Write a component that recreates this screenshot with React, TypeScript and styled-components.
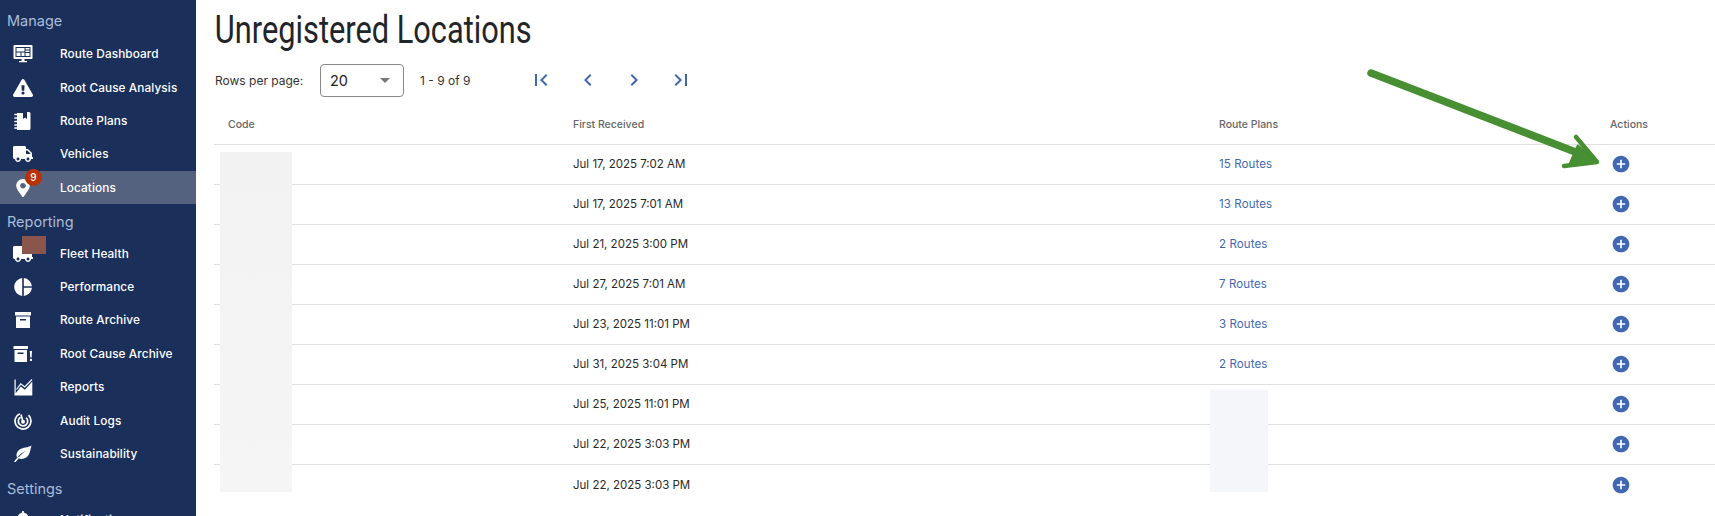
import styled, { createGlobalStyle } from 'styled-components';
import { FaBell, FaExclamationTriangle, FaMapMarkerAlt, FaTruck } from 'react-icons/fa';
import { MdAddCircle, MdChevronLeft, MdChevronRight, MdFirstPage, MdLastPage } from 'react-icons/md';
import type { ReactNode } from 'react';

const GlobalStyle = createGlobalStyle`
    html, body {
        margin: 0;
        height: 100%;
        overflow: hidden;
        background: #fff;
        font-family: Inter, 'Liberation Sans', sans-serif;
    }
    #root { height: 100%; }
`;

const DashboardIcon = () => (
    <svg width="20" height="20" viewBox="0 0 20 20" fill="#fff">
        <path fillRule="evenodd" d="M1.5 1h17a1 1 0 0 1 1 1v12a1 1 0 0 1-1 1h-17a1 1 0 0 1-1-1V2a1 1 0 0 1 1-1zM2.5 3v10h15V3zM3.5 4h8v3.5h-8zM3.5 8.5h4v3.5h-4zM8.5 8.5h3v3.5h-3zM12.5 4h4v1.5h-4zM12.5 6.5h4v1.5h-4zM12.5 9h4v3h-4z" />
        <path d="M8.5 15h3v2h2.5v1.2H6V17h2.5z" />
    </svg>
);

const PlansIcon = () => (
    <svg width="18" height="20" viewBox="0 0 18 20" fill="#fff">
        <path d="M3 2h6v6l2-1.5L13 8V1h2a1.5 1.5 0 0 1 1.5 1.5v15A1.5 1.5 0 0 1 15 19H3z" />
        <path d="M1 3.5h3M1 7h3M1 10.5h3M1 14h3M1 17h3" stroke="#fff" strokeWidth="1.7" strokeLinecap="round" />
    </svg>
);

const PieIcon = () => (
    <svg width="18" height="18" viewBox="0 0 18 18" fill="#fff">
        <path d="M8.200 0.050v17.900A9 9 0 0 1 8.200 0.050z" />
        <path d="M9.800 0.050A9 9 0 0 1 17.950 8.200H9.800z" />
        <path d="M9.800 9.800h8.150A9 9 0 0 1 9.800 17.950z" />
    </svg>
);

const ArchiveIcon = () => (
    <svg width="18" height="18" viewBox="0 0 18 18" fill="#fff">
        <path d="M1 1h16v3.500H1z" />
        <path fillRule="evenodd" d="M2 5.500h14V17H2zM6 8v1.600h6V8z" />
    </svg>
);

const CauseArchiveIcon = () => (
    <svg width="20" height="18" viewBox="0 0 20 18" fill="#fff">
        <path d="M0.500 1h14.500v3H0.500z" />
        <path fillRule="evenodd" d="M1.500 5h12.500v12H1.500zM4.500 7.500v1.600h6V7.500z" />
        <path d="M16.800 6h2.200l-.4 6.500h-1.400zM16.900 13.800h2v2.200h-2z" />
    </svg>
);

const ReportsIcon = () => (
    <svg width="19" height="17" viewBox="0 0 19 17" fill="#fff">
        <path d="M0.500 0.500h1.200v13.800L6.800 7.500l4.100 3.300L18.300 2.500v14H0.500z" />
        <path d="M2.500 10.500L6.800 4.800 10.700 8 18 0.500" fill="none" stroke="#fff" strokeWidth="1.100" />
    </svg>
);

const AuditIcon = () => (
    <svg width="18" height="18" viewBox="0 0 18 18" fill="none" stroke="#fff">
        <path d="M5.800 1.700A8 8 0 1 0 14.500 3.200" strokeWidth="1.700" />
        <path d="M6.600 5.200A4.700 4.700 0 1 0 12 5.600" strokeWidth="1.700" />
        <circle cx="9" cy="9.700" r="2" fill="#fff" stroke="none" />
        <path d="M9 9.700L7 2.500" strokeWidth="1.600" />
    </svg>
);

const LeafIcon = () => (
    <svg width="18" height="17" viewBox="0 0 18 17" fill="#fff">
        <path d="M17.500 0.500C16.800 2.500 16.500 6 15 9.300 13 13.500 8.500 14.800 4.300 13.300 6 10 9 7.500 12.500 5.700 8.500 7 5.200 9.500 3.300 12.700 1.800 10.500 2.500 6.500 6 4.300 9 2.400 14 2.800 17.500 0.500z" />
        <path d="M4.500 12.500L1 16.500" stroke="#fff" strokeWidth="1.500" strokeLinecap="round" />
    </svg>
);

const Page = styled.div`
    display: flex;
    height: 100%;
`;

const Sidebar = styled.nav`
    flex: 0 0 196px;
    height: 516px;
    padding-top: 5px;
    background: #1b2f5b;
    overflow: hidden;
    box-sizing: border-box;
`;

const SectionLabel = styled.div`
    height: 32.5px;
    padding: 2px 0 0 7px;
    box-sizing: border-box;
    line-height: 31px;
    font-size: 14.5px;
    color: #a9bcd8;

    &:first-child {
        padding-top: 0;
    }
`;

const NavItem = styled.div<{ $active?: boolean }>`
    position: relative;
    display: flex;
    align-items: center;
    height: 33.4px;
    background: ${p => (p.$active ? '#54627f' : 'transparent')};
    color: #fff;
    font-size: 11.8px;
    font-weight: 500;
    letter-spacing: 0.1px;
`;

const NavIcon = styled.span`
    display: flex;
    flex: 0 0 60px;
    justify-content: center;
    padding-right: 14px;
    box-sizing: border-box;
    color: #fff;
`;

const Badge = styled.span`
    position: absolute;
    left: 25px;
    top: -2px;
    width: 17px;
    height: 17px;
    border-radius: 50%;
    background: #b83200;
    color: #fff;
    font-size: 10px;
    line-height: 17px;
    text-align: center;
`;

const RedactPatch = styled.span`
    position: absolute;
    left: 22px;
    top: -1px;
    width: 24px;
    height: 18px;
    background: #8a564c;
`;

const Main = styled.main`
    position: relative;
    flex: 1;
    min-width: 0;
    padding-left: 18px;
`;

const Title = styled.h1`
    margin: 0;
    height: 60px;
    padding-left: 1px;
    font-family: Roboto, sans-serif;
    font-size: 38px;
    font-weight: 400;
    line-height: 60px;
    color: #212529;
    white-space: nowrap;
    transform: scaleX(0.81);
    transform-origin: left center;
`;

const Toolbar = styled.div`
    display: flex;
    align-items: center;
    height: 36px;
    margin-top: 2px;
    font-size: 12px;
    color: #333;
`;

const RowsLabel = styled.span`
    width: 106px;
    padding-left: 1px;
    box-sizing: border-box;
`;

const SelectBox = styled.div`
    display: flex;
    align-items: center;
    justify-content: space-between;
    width: 84px;
    height: 33px;
    padding: 0 13px 0 9px;
    border: 1px solid #888;
    border-radius: 4px;
    box-sizing: border-box;
    font-size: 14.5px;
    color: #222;
`;

const Caret = styled.span`
    width: 0;
    height: 0;
    border-left: 5px solid transparent;
    border-right: 5px solid transparent;
    border-top: 5px solid #777;
`;

const RangeText = styled.span`
    width: 97.500px;
    margin-left: 16px;
`;

const PagerButton = styled.span`
    display: flex;
    justify-content: center;
    width: 46.700px;
    color: #4267b2;
    font-size: 24px;
`;

const TableRow = styled.div<{ $head?: boolean }>`
    display: grid;
    grid-template-columns: 345px 646px 391px 119px;
    align-items: center;
    height: ${p => (p.$head ? '41px' : '40px')};
    margin-top: ${p => (p.$head ? '6px' : '0')};
    padding-bottom: ${p => (p.$head ? '0' : '2px')};
    border-bottom: 1px solid #e0e0e0;
    box-sizing: border-box;
    font-size: ${p => (p.$head ? '10.5px' : '11.5px')};
    font-weight: ${p => (p.$head ? 500 : 400)};
    color: ${p => (p.$head ? '#666' : '#2a2a2a')};
`;

const TableBody = styled.div`
    & > div:last-child {
        padding-bottom: 0;
        border-bottom: 0;
    }
`;

const Cell = styled.div`
    padding-left: 14px;
`;

const RouteLink = styled.span`
    color: #4267b2;
    letter-spacing: 0.1px;
`;

const ActionButton = styled.span`
    display: flex;
    margin-left: 1px;
    color: #4267b2;
    font-size: 20px;
`;

const Redaction = styled.div<{ $left: number; $top: number; $width: number; $height: number; $color: string }>`
    position: absolute;
    left: ${p => p.$left}px;
    top: ${p => p.$top}px;
    width: ${p => p.$width}px;
    height: ${p => p.$height}px;
    background: ${p => p.$color};
`;

const Annotation = styled.svg`
    position: absolute;
    left: 1171px;
    top: 68px;
    pointer-events: none;
`;

const manage: { label: string; icon: ReactNode }[] = [
    { label: 'Route Dashboard', icon: <DashboardIcon /> },
    { label: 'Root Cause Analysis', icon: <FaExclamationTriangle size={20} /> },
    { label: 'Route Plans', icon: <PlansIcon /> },
    { label: 'Vehicles', icon: <FaTruck size={20} /> },
];

const reporting: { label: string; icon: ReactNode }[] = [
    { label: 'Performance', icon: <PieIcon /> },
    { label: 'Route Archive', icon: <ArchiveIcon /> },
    { label: 'Root Cause Archive', icon: <CauseArchiveIcon /> },
    { label: 'Reports', icon: <ReportsIcon /> },
    { label: 'Audit Logs', icon: <AuditIcon /> },
    { label: 'Sustainability', icon: <LeafIcon /> },
];

const rows = [
    { received: 'Jul 17, 2025 7:02 AM', routes: '15 Routes' },
    { received: 'Jul 17, 2025 7:01 AM', routes: '13 Routes' },
    { received: 'Jul 21, 2025 3:00 PM', routes: '2 Routes' },
    { received: 'Jul 27, 2025 7:01 AM', routes: '7 Routes' },
    { received: 'Jul 23, 2025 11:01 PM', routes: '3 Routes' },
    { received: 'Jul 31, 2025 3:04 PM', routes: '2 Routes' },
    { received: 'Jul 25, 2025 11:01 PM', routes: '' },
    { received: 'Jul 22, 2025 3:03 PM', routes: '' },
    { received: 'Jul 22, 2025 3:03 PM', routes: '' },
];

export default function App() {
    return (
        <>
            <GlobalStyle />
            <Page>
                <Sidebar>
                    <SectionLabel>Manage</SectionLabel>
                    {manage.map(item => (
                        <NavItem key={item.label}>
                            <NavIcon>{item.icon}</NavIcon>
                            {item.label}
                        </NavItem>
                    ))}
                    <NavItem $active>
                        <NavIcon><FaMapMarkerAlt size={18} /></NavIcon>
                        Locations
                        <Badge>9</Badge>
                    </NavItem>
                    <SectionLabel>Reporting</SectionLabel>
                    <NavItem>
                        <NavIcon><FaTruck size={20} /></NavIcon>
                        Fleet Health
                        <RedactPatch />
                    </NavItem>
                    {reporting.map(item => (
                        <NavItem key={item.label}>
                            <NavIcon>{item.icon}</NavIcon>
                            {item.label}
                        </NavItem>
                    ))}
                    <SectionLabel>Settings</SectionLabel>
                    <NavItem>
                        <NavIcon><FaBell size={18} /></NavIcon>
                        Notifications
                    </NavItem>
                </Sidebar>
                <Main>
                    <Title>Unregistered Locations</Title>
                    <Toolbar>
                        <RowsLabel>Rows per page:</RowsLabel>
                        <SelectBox>20<Caret /></SelectBox>
                        <RangeText>1 - 9 of 9</RangeText>
                        <PagerButton><MdFirstPage /></PagerButton>
                        <PagerButton><MdChevronLeft /></PagerButton>
                        <PagerButton><MdChevronRight /></PagerButton>
                        <PagerButton><MdLastPage /></PagerButton>
                    </Toolbar>
                    <TableRow $head>
                        <Cell>Code</Cell>
                        <Cell>First Received</Cell>
                        <Cell>Route Plans</Cell>
                        <Cell>Actions</Cell>
                    </TableRow>
                    <TableBody>
                        {rows.map((row, index) => (
                            <TableRow key={index}>
                                <Cell />
                                <Cell>{row.received}</Cell>
                                <Cell><RouteLink>{row.routes}</RouteLink></Cell>
                                <Cell><ActionButton><MdAddCircle /></ActionButton></Cell>
                            </TableRow>
                        ))}
                    </TableBody>
                    <Redaction $left={24} $top={152} $width={72} $height={340} $color="linear-gradient(#f2f2f2, #f5f5f5)" />
                    <Redaction $left={1014} $top={390} $width={58} $height={102} $color="#f5f6fa" />
                    <Annotation width="240" height="110" viewBox="0 0 240 110" fill="none" stroke="#478f32" strokeLinecap="round" strokeLinejoin="round">
                        <path d="M4 5L224 90" strokeWidth="7.500" />
                        <path d="M209 69L230 94L197 98" strokeWidth="4.500" />
                        <path d="M211 78L228 93L203 96z" fill="#478f32" strokeWidth="3" />
                    </Annotation>
                </Main>
            </Page>
        </>
    );
}
